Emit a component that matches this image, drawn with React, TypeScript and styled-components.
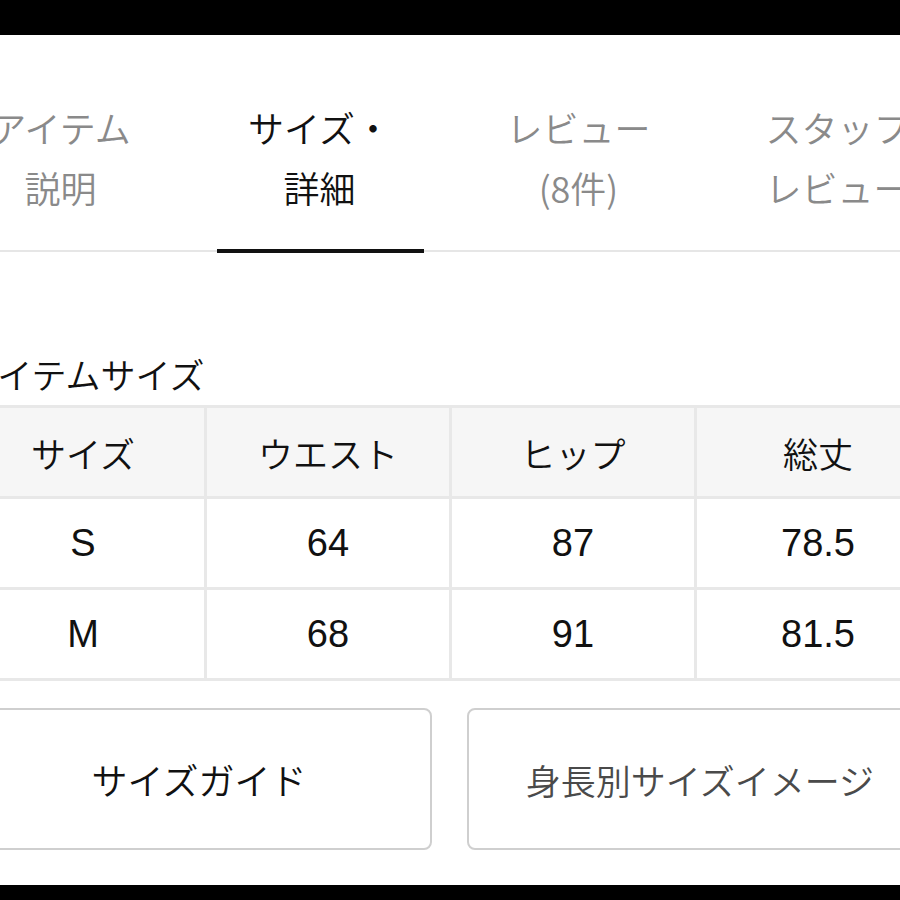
import React from "react";
import styled, { createGlobalStyle } from "styled-components";

const GlobalStyle = createGlobalStyle`
  html, body { margin: 0; padding: 0; background: #fff; }
  body {
    font-family: "Noto Sans CJK JP", "Noto Sans", sans-serif;
    font-weight: 350;
  }
  * { box-sizing: border-box; }
`;

const Page = styled.div`
  width: 900px;
  height: 900px;
  overflow: hidden;
  display: flex;
  flex-direction: column;
  background: #fff;
`;

const Bar = styled.div<{ $h: number }>`
  height: ${(p) => p.$h}px;
  flex-shrink: 0;
  background: #000;
`;

const Main = styled.div`
  flex: 1;
  display: flex;
  flex-direction: column;
  overflow: hidden;
`;

const TabBar = styled.div`
  display: flex;
  margin-left: -69px;
  width: 1036px;
  border-bottom: 2px solid #e6e6e6;
  margin-bottom: 1px;
`;

const Tab = styled.div<{ $active?: boolean }>`
  position: relative;
  width: 259px;
  flex-shrink: 0;
  padding: 62px 0 33px;
  text-align: center;
  font-size: 36px;
  line-height: 60px;
  white-space: nowrap;
  color: ${(p) => (p.$active ? "#111" : "#8a8a8a")};
  &::after {
    content: "";
    display: ${(p) => (p.$active ? "block" : "none")};
    position: absolute;
    left: 27px;
    right: 25px;
    bottom: -3px;
    height: 4px;
    background: #111;
  }
`;

const Section = styled.div`
  margin-left: -41px;
  display: flex;
  flex-direction: column;
`;

const Heading = styled.h2`
  margin: 96px 0 6px;
  padding-left: 5px;
  font-size: 35px;
  font-weight: 350;
  line-height: 50px;
  color: #111;
`;

const Grid = styled.div`
  display: grid;
  grid-template-columns: repeat(4, 242px);
  grid-auto-rows: 88px;
  gap: 3px;
  padding: 3px;
  width: max-content;
  background: #e8e8e8;
`;

const Cell = styled.div<{ $head?: boolean; $latin?: boolean }>`
  display: flex;
  align-items: center;
  justify-content: center;
  background: ${(p) => (p.$head ? "#f6f6f6" : "#fff")};
  color: #111;
  font-size: ${(p) => (p.$latin ? "38px" : "35px")};
  font-weight: ${(p) => (p.$latin ? 400 : 350)};
  font-family: ${(p) =>
    p.$latin
      ? `"Liberation Sans", "Noto Sans CJK JP", sans-serif`
      : `"Noto Sans CJK JP", sans-serif`};
`;

const Buttons = styled.div`
  display: flex;
  gap: 35px;
  margin-top: 27px;
  padding-left: 7px;
`;

const Button = styled.div<{ $muted?: boolean }>`
  width: 466px;
  height: 142px;
  flex-shrink: 0;
  border: 2px solid #cfcfcf;
  border-radius: 8px;
  display: flex;
  align-items: center;
  justify-content: center;
  font-size: ${(p) => (p.$muted ? "35px" : "36px")};
  color: ${(p) => (p.$muted ? "#4a4a4a" : "#111")};
`;

const Spacer = styled.div`
  flex: 1;
`;

const tabs = [
  { l1: "アイテム", l2: "説明" },
  { l1: "サイズ・", l2: "詳細", active: true },
  { l1: "レビュー", l2: "(8件)" },
  { l1: "スタッフ", l2: "レビュー" },
];

const header = ["サイズ", "ウエスト", "ヒップ", "総丈"];
const rows = [
  ["S", "64", "87", "78.5"],
  ["M", "68", "91", "81.5"],
];

export default function App() {
  return (
    <>
      <GlobalStyle />
      <Page>
        <Bar $h={35} />
        <Main>
          <TabBar>
            {tabs.map((t) => (
              <Tab key={t.l1 + t.l2} $active={t.active}>
                {t.l1}
                <br />
                {t.l2}
              </Tab>
            ))}
          </TabBar>
          <Section>
            <Heading>アイテムサイズ</Heading>
            <Grid>
              {header.map((h) => (
                <Cell key={h} $head>
                  {h}
                </Cell>
              ))}
              {rows.map((r) =>
                r.map((v, i) => (
                  <Cell key={r[0] + i} $latin>
                    {v}
                  </Cell>
                ))
              )}
            </Grid>
            <Buttons>
              <Button>サイズガイド</Button>
              <Button $muted>身長別サイズイメージ</Button>
            </Buttons>
          </Section>
          <Spacer />
        </Main>
        <Bar $h={15} />
      </Page>
    </>
  );
}
